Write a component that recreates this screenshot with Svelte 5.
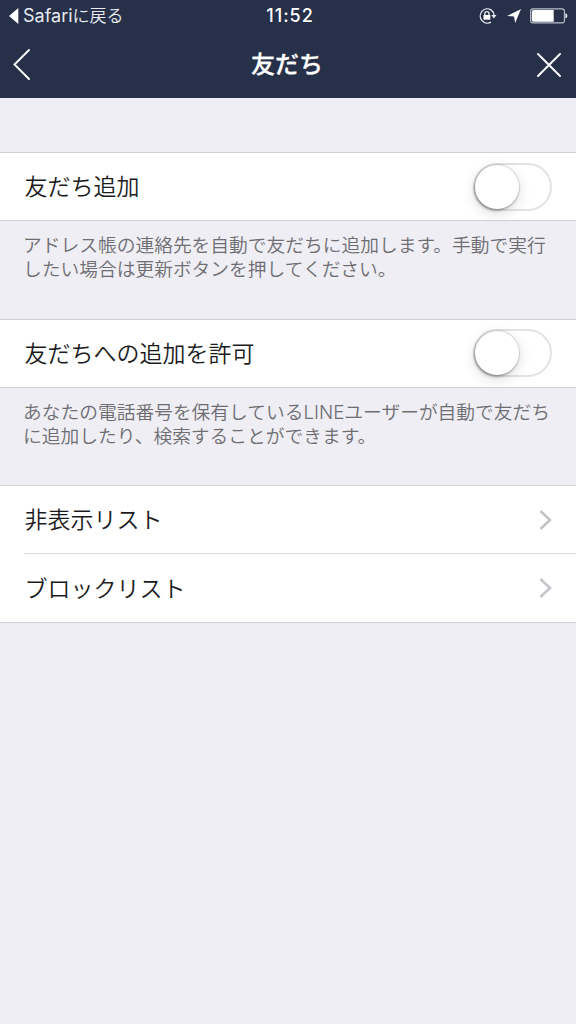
<script lang="ts">
	interface ToggleItem {
		label: string;
		lines: string[];
		on: boolean;
	}

	let toggles: ToggleItem[] = $state([
		{
			label: '友だち追加',
			lines: [
				'アドレス帳の連絡先を自動で友だちに追加します。手動で実行',
				'したい場合は更新ボタンを押してください。'
			],
			on: false
		},
		{
			label: '友だちへの追加を許可',
			lines: [
				'あなたの電話番号を保有しているLINEユーザーが自動で友だち',
				'に追加したり、検索することができます。'
			],
			on: false
		}
	]);

	const links = ['非表示リスト', 'ブロックリスト'];
</script>

<div class="screen" lang="ja">
	<header>
		<div class="status">
			<div class="return">
				<svg width="10" height="16" viewBox="0 0 10 16"><path d="M9.3 0v16L0 8z" fill="#fff" /></svg>
				<span><span class="latin">Safari</span>に戻る</span>
			</div>
			<time>11:52</time>
			<div class="indicators">
				<svg width="18" height="16" viewBox="0 0 18 16" fill="none" stroke="#e9ebf0">
					<path d="M12 1.9A7.1 7.1 0 1 0 12 14.1M12 1.9A7.1 7.1 0 0 1 15 7" stroke-width="1.3" />
					<path d="M12.3 7h5.2l-2.6 3.5z" fill="#e9ebf0" stroke="none" />
					<path d="M5.8 7.5V5.8a2.1 2.1 0 0 1 4.2 0v1.7" stroke-width="1.3" />
					<path d="M4.5 7h6.8v4.7H4.5z" fill="#fff" stroke="none" />
				</svg>
				<svg class="arrow" width="14" height="14" viewBox="0 0 14 14">
					<path d="M14 0L8.2 14L7 7.6L0 7z" fill="#fff" />
				</svg>
				<svg width="38" height="16" viewBox="0 0 38 16">
					<rect x=".6" y=".9" width="33.8" height="14" rx="2.2" fill="none" stroke="#b9bec9" stroke-width="1.1" />
					<path d="M3.5 2h20.2v11.8H3.5A1.7 1.7 0 0 1 1.8 12V3.7A1.7 1.7 0 0 1 3.5 2z" fill="#fff" />
					<path d="M35.4 5.3c2.6.5 2.6 4.7 0 5.2z" fill="#e4e7ed" />
				</svg>
			</div>
		</div>
		<nav>
			<button aria-label="戻る">
				<svg width="17" height="31" viewBox="0 0 17 31"><path d="M16 1L1.5 15.5L16 30" /></svg>
			</button>
			<h1>友だち</h1>
			<button class="close" aria-label="閉じる">
				<svg width="24" height="24" viewBox="0 0 24 24"><path d="M1 1l22 22M23 1L1 23" /></svg>
			</button>
		</nav>
	</header>

	<main>
		{#each toggles as item}
			<section>
				<div class="group row">
					<span class="label">{item.label}</span>
					<button
						class="switch"
						class:on={item.on}
						role="switch"
						aria-checked={item.on}
						aria-label={item.label}
						onclick={() => (item.on = !item.on)}
					>
						<span class="knob"></span>
					</button>
				</div>
				<p>
					{#each item.lines as line}
						<span>{line}</span>
					{/each}
				</p>
			</section>
		{/each}

		<div class="group">
			{#each links as link}
				<div class="row link">
					<span class="label">{link}</span>
					<svg width="13" height="20" viewBox="0 0 13 20"><path d="M1.5 1L11 10L1.5 19" /></svg>
				</div>
			{/each}
		</div>
	</main>
</div>

<style>
	:global(body) {
		background: #efeef4;
	}

	.screen {
		min-height: 1024px;
		background: #efeef4;
		color: #1c1c1e;
		font-family: 'Noto Sans CJK JP', sans-serif;
		font-weight: 350;
	}

	header {
		height: 98px;
		background: #263048;
		color: #fff;
	}

	.status {
		display: grid;
		grid-template-columns: 1fr auto 1fr;
		align-items: center;
		height: 31px;
		padding: 0 8px 0 9px;
	}

	.return {
		display: flex;
		align-items: center;
		gap: 4px;
		font-size: 17px;
		line-height: 28px;
		color: #e9ebf0;
	}

	.return > span {
		padding-bottom: 1px;
	}

	.latin {
		font-family: Inter, sans-serif;
		font-weight: 400;
		font-size: 18px;
	}

	time {
		padding-left: 3px;
		font-family: Inter, sans-serif;
		font-size: 18px;
		font-weight: 500;
		letter-spacing: 1px;
	}

	.indicators {
		display: flex;
		justify-content: flex-end;
		align-items: center;
	}

	.arrow {
		margin: 0 9px 0 10px;
	}

	nav {
		display: grid;
		grid-template-columns: 1fr auto 1fr;
		align-items: center;
		height: 67px;
		padding: 0 15px 0 13px;
	}

	nav button {
		display: flex;
		padding: 0;
		border: 0;
		background: none;
	}

	.close {
		justify-content: flex-end;
	}

	nav path {
		fill: none;
		stroke: #fff;
		stroke-width: 1.9;
		stroke-linecap: round;
	}

	h1 {
		margin: 0;
		padding-bottom: 3px;
		font-size: 24px;
		font-weight: 500;
		line-height: 34px;
		-webkit-text-stroke: 0.3px #fff;
	}

	main {
		padding-top: 54px;
	}

	section {
		height: 166.5px;
	}

	.group {
		border-top: 1px solid #d0cfd5;
		border-bottom: 1px solid #d0cfd5;
		background: #fff;
	}

	.row {
		display: flex;
		justify-content: space-between;
		align-items: center;
		height: 67px;
		padding: 0 24px;
		font-size: 23px;
	}

	.label {
		padding: 0 0 3px 0.5px;
	}

	.switch {
		display: flex;
		box-sizing: border-box;
		width: 79px;
		height: 48px;
		padding: 0;
		border: 2px solid #e3e3e3;
		border-radius: 24px;
		background: #fff;
	}

	.switch.on {
		justify-content: flex-end;
		border-color: #4cd964;
		background: #4cd964;
	}

	.knob {
		width: 44px;
		height: 44px;
		border-radius: 50%;
		background: #fff;
		box-shadow: 0 0 1px 1px rgba(0, 0, 0, 0.12), -1px 2px 3px rgba(0, 0, 0, 0.24), 0 4px 14px rgba(0, 0, 0, 0.14);
	}

	p {
		margin: 0;
		padding: 13px 0 0 23px;
		font-family: Inter, 'Noto Sans CJK JP', sans-serif;
		font-size: 18.74px;
		line-height: 24px;
		color: #6d6d72;
	}

	p span {
		display: block;
		white-space: nowrap;
	}

	.link {
		margin-left: 24px;
		padding-left: 0;
	}

	.link + .link {
		height: 68px;
		border-top: 1px solid #dcdce0;
	}

	.link path {
		fill: none;
		stroke: #c5c5c9;
		stroke-width: 2.6;
	}
</style>
